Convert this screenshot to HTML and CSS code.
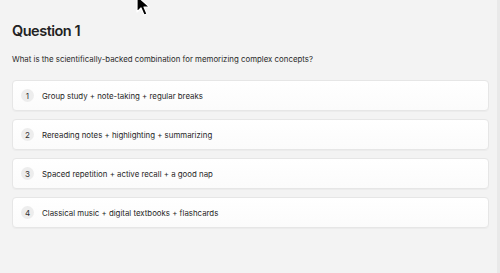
FILE: index.html
```html
<!DOCTYPE html>
<html>
<head>
<meta charset="utf-8">
<link rel="stylesheet" href="styles.css">
</head>
<body>
<div class="page">
  <h1 class="title">Question 1</h1>
  <p class="prompt">What is the scientifically-backed combination for memorizing complex concepts?</p>
  <div class="options">
    <div class="option"><span class="badge">1</span><span class="label">Group study + note-taking + regular breaks</span></div>
    <div class="option"><span class="badge">2</span><span class="label">Rereading notes + highlighting + summarizing</span></div>
    <div class="option"><span class="badge">3</span><span class="label">Spaced repetition + active recall + a good nap</span></div>
    <div class="option"><span class="badge">4</span><span class="label">Classical music + digital textbooks + flashcards</span></div>
  </div>
</div>
<svg class="cursor" width="16" height="22" viewBox="0 0 16 22"><path d="M1 1 L1 17 L5 13 L8 20 L11 19 L8 12 L13.5 12 Z" fill="#000" stroke="#fff" stroke-width="1.2" stroke-linejoin="round"/></svg>
</body>
</html>
```
FILE: styles.css
```css
html, body { margin: 0; padding: 0; }
body {
  width: 500px;
  height: 273px;
  background: #f3f3f3;
  font-family: Inter, "Noto Sans", sans-serif;
  color: #1f1f1f;
  overflow: hidden;
  position: relative;
  box-sizing: border-box;
  border-right: 3px solid #e9e9e9;
}
.page {
  padding: 21px 8px 0 12px;
}
.title {
  margin: 0;
  font-size: 14.5px;
  font-weight: 600;
  line-height: 19px;
  letter-spacing: -0.5px;
  color: #222;
}
.prompt {
  margin: 13px 0 0;
  font-size: 7.85px;
  line-height: 12px;
  color: #2a2a2a;
}
.options {
  margin-top: 15px;
  display: flex;
  flex-direction: column;
  gap: 8px;
}
.option {
  height: 31px;
  box-sizing: border-box;
  display: flex;
  align-items: center;
  gap: 8px;
  padding-left: 8px;
  background: linear-gradient(#ffffff, #fbfbfb);
  border: 1px solid #e6e6e6;
  border-radius: 4px;
  box-shadow: 0 1px 1px rgba(0,0,0,0.03);
}
.badge {
  width: 13px;
  height: 13px;
  border-radius: 50%;
  background: #ededed;
  display: flex;
  align-items: center;
  justify-content: center;
  font-size: 8px;
  color: #333;
}
.label {
  font-size: 7.85px;
  color: #262626;
}
.cursor {
  position: absolute;
  left: 136px;
  top: -5px;
}
```
